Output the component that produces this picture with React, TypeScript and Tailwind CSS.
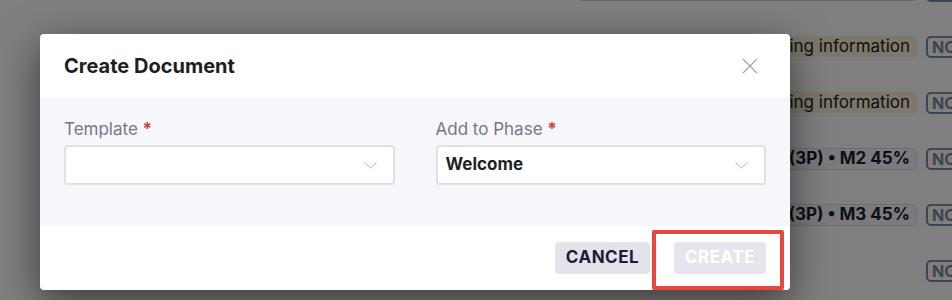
import React from "react";

const Chevron = () => (
    <svg width="13" height="7" viewBox="0 0 13 7" fill="none" className="shrink-0">
        <path d="M0.5 0.5L6.5 6L12.5 0.5" stroke="#aeaebd" strokeWidth="1" />
    </svg>
);

const Field = ({ label, value }: { label: string; value?: string }) => (
    <div className="flex flex-col gap-[5px]">
        <label className="text-[17px] leading-[21px] text-[#76768a]">
            {label} <span className="text-[#d2403c] font-bold">*</span>
        </label>
        <div className="h-[40px] flex items-center justify-between bg-white border-2 border-[#e0e0e9] rounded-[4px] pl-[8px] pr-[16px]">
            <span className="text-[17px] font-bold text-[#1f1f24]">{value ?? ""}</span>
            <Chevron />
        </div>
    </div>
);

const BgRow = ({ pill, kind }: { pill?: string; kind?: "warn" | "plain" | "top" }) => (
    <div className="h-[21px] flex items-center justify-end gap-[9px]">
        {pill && kind === "warn" && (
            <span className="h-[21px] flex items-center px-[7px] rounded-[4px] bg-[#fbf0d4] text-[17px] text-[#1b1d2a]">
                {pill}
            </span>
        )}
        {pill && kind === "plain" && (
            <span className="h-[22px] flex items-center px-[6px] rounded-[5px] bg-[#f6f6fa] border border-[#dcdce6] text-[17px] font-bold text-[#1b1d2a]">
                {pill}
            </span>
        )}
        {kind === "top" && (
            <span className="h-[21px] w-[339px] rounded-[5px] bg-[#f6f6fa] border border-[#c8c8d4]" />
        )}
        <span className="h-[22px] w-[40px] flex items-center pl-[4px] rounded-[5px] border-2 border-[#7a8aa4] text-[16px] font-bold text-[#7a8aa4] shrink-0">
            NO
        </span>
    </div>
);

export default function App() {
    return (
        <div
            className="relative w-[952px] h-[300px] overflow-hidden bg-white"
            style={{ fontFamily: "Inter, 'Noto Sans', sans-serif" }}
        >
            {/* page behind the modal */}
            <div className="flex flex-col gap-[35px] mt-[-20px] w-[966px]">
                <BgRow kind="top" />
                <BgRow pill="Missing information" kind="warn" />
                <BgRow pill="Missing information" kind="warn" />
                <BgRow pill="Onboarding (3P) • M2 45%" kind="plain" />
                <BgRow pill="Onboarding (3P) • M3 45%" kind="plain" />
                <BgRow />
            </div>

            {/* overlay + dialog */}
            <div className="absolute inset-0 bg-black/50 pl-[40px] pt-[34px]">
                <div className="relative w-[750px] bg-white rounded-[4px] overflow-hidden shadow-[0_12px_40px_rgba(0,0,0,0.55)]">
                    <div className="h-[64px] flex items-center justify-between px-[24px]">
                        <h2 className="text-[20px] font-bold text-[#1e1e22]">Create Document</h2>
                        <svg width="16" height="16" viewBox="0 0 16 16" className="mr-[8px]">
                            <path d="M1 1L15 15M15 1L1 15" stroke="#a2a2b0" strokeWidth="1.2" />
                        </svg>
                    </div>
                    <div className="bg-[#f6f6fb] px-[24px] pt-[21px] pb-[41px] grid grid-cols-2 gap-[41px]">
                        <Field label="Template" />
                        <Field label="Add to Phase" value="Welcome" />
                    </div>
                    <div className="h-[64px] flex items-center justify-end gap-[24px] px-[24px]">
                        <button className="w-[95px] h-[32px] rounded-[4px] bg-[#e3e3eb] text-[17px] font-bold tracking-[0.5px] text-[#1c1c33]">
                            CANCEL
                        </button>
                        <button className="w-[92px] h-[32px] rounded-[4px] bg-[#e5e5ed] text-[17px] font-bold tracking-[0.5px] text-white">
                            CREATE
                        </button>
                    </div>
                    {/* highlight annotation */}
                    <div className="absolute left-[612px] top-[196px] w-[132px] h-[60px] border-[4px] border-[#e8463e] rounded-[2px]" />
                </div>
            </div>
        </div>
    );
}
